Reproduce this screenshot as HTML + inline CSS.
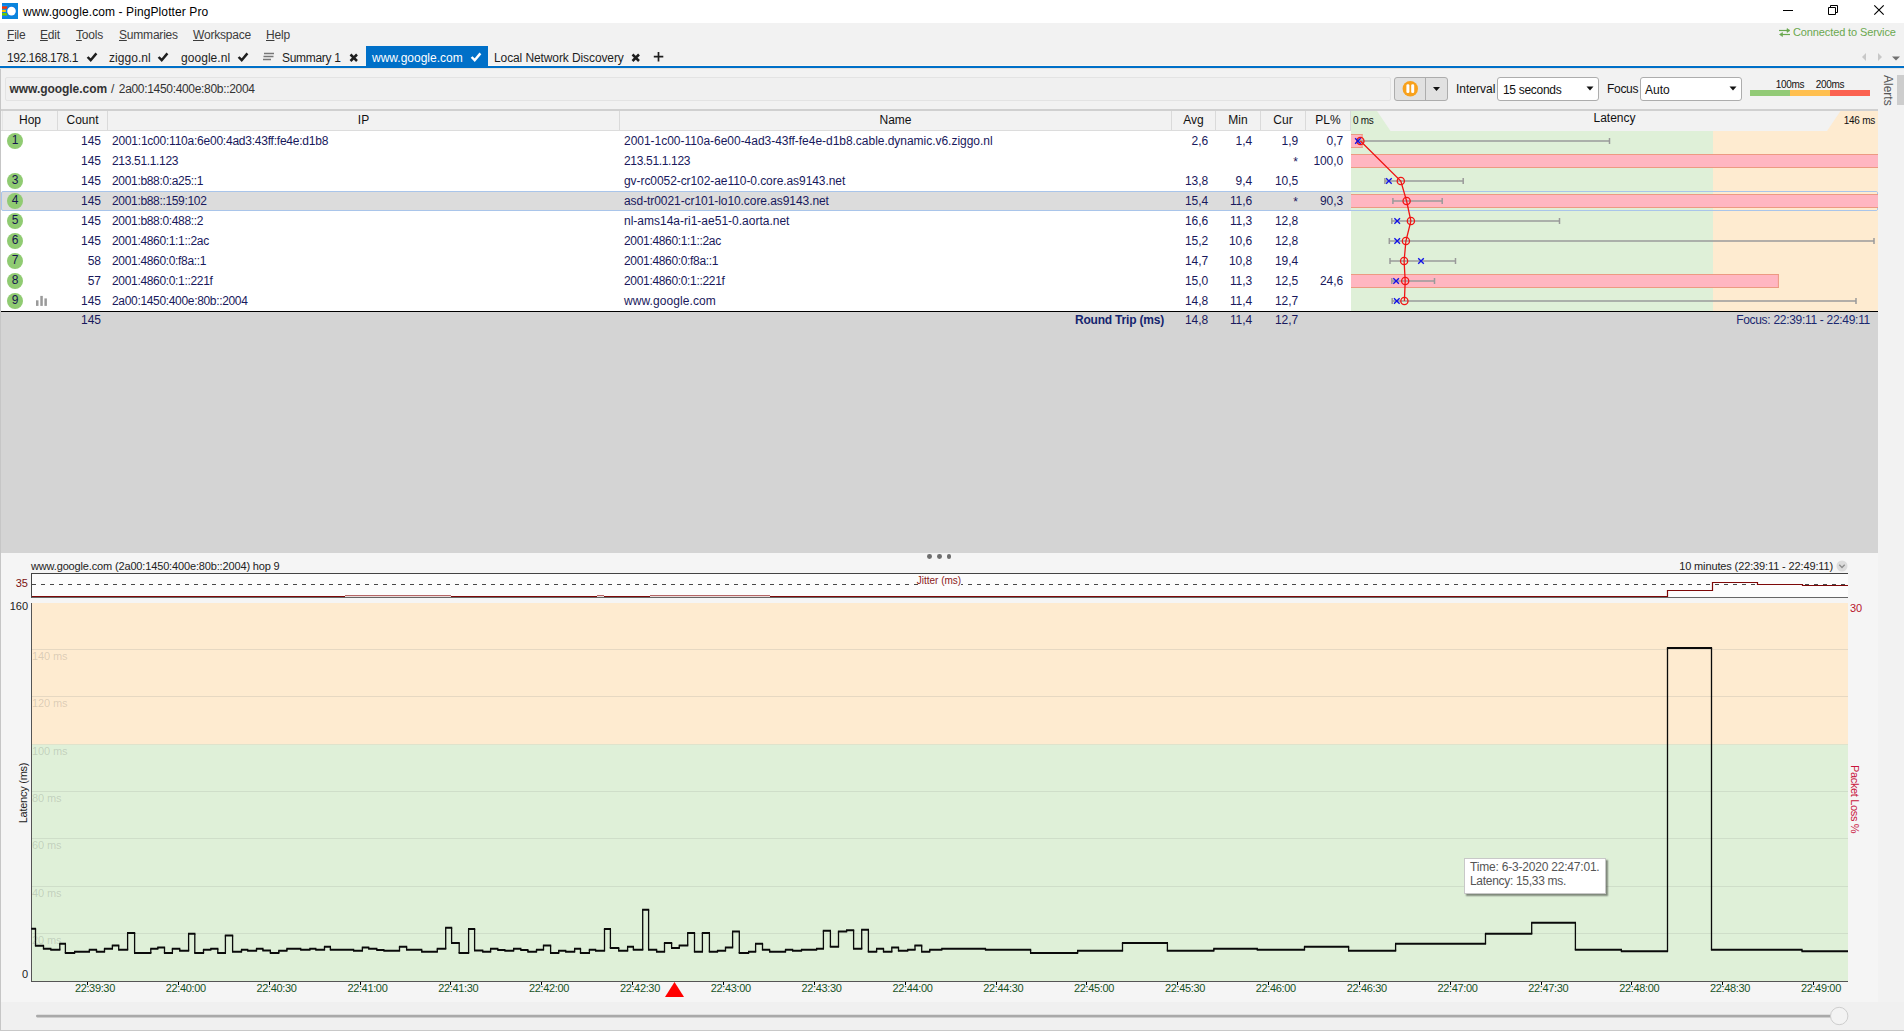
<!DOCTYPE html>
<html lang="en"><head><meta charset="utf-8"><title>www.google.com - PingPlotter Pro</title>
<style>
html,body{margin:0;padding:0;}
body{width:1904px;height:1031px;overflow:hidden;position:relative;background:#f2f2f2;font-family:"Liberation Sans",sans-serif;font-size:12px;color:#000;}
div{position:absolute;box-sizing:border-box;}
.t{white-space:nowrap;}
.nv{color:#18185c;}
svg{position:absolute;left:0;top:0;overflow:visible;}
u{text-decoration:underline;text-underline-offset:1px;}
</style></head><body>

<div style="left:0px;top:0px;width:1904px;height:23px;background:#fff;"></div>
<svg width="24" height="24" viewBox="0 0 24 24" style="left:0;top:0">
<rect x="2" y="3" width="16" height="16" fill="#0a84dc"/>
<rect x="2" y="5" width="5.5" height="1.2" fill="#0a90ff"/>
<rect x="2" y="6.4" width="5.2" height="2.4" fill="#ff3200"/>
<rect x="2" y="9.8" width="3.8" height="2.2" fill="#ffc400"/>
<rect x="2" y="13" width="5.2" height="2.5" fill="#6cc800"/>
<rect x="2" y="16" width="5.5" height="1.2" fill="#0a80ff"/>
<circle cx="11.5" cy="11.1" r="5.3" fill="#0a7ce4"/>
<circle cx="11.5" cy="11.1" r="4.3" fill="#fff"/>
</svg>
<div class="t" style="left:23px;top:1px;height:23px;line-height:23px;font-size:12px;letter-spacing:0.1px;">www.google.com - PingPlotter Pro</div>
<svg width="1904" height="24" style="left:0;top:0">
<path d="M1783 10.5h10" stroke="#000" stroke-width="1" fill="none"/>
<path d="M1828.5 7.5h7v7h-7z M1830.5 7.5v-2h7v7h-2" stroke="#000" stroke-width="1" fill="none"/>
<path d="M1874.3 5.3l9.4 9.4 M1883.7 5.3l-9.4 9.4" stroke="#000" stroke-width="1.15" fill="none"/>
</svg>
<div class="t" style="left:7px;top:25px;height:20px;line-height:20px;color:#3c3c3c;letter-spacing:-0.2px;"><u>F</u>ile</div>
<div class="t" style="left:40px;top:25px;height:20px;line-height:20px;color:#3c3c3c;letter-spacing:-0.2px;"><u>E</u>dit</div>
<div class="t" style="left:76px;top:25px;height:20px;line-height:20px;color:#3c3c3c;letter-spacing:-0.2px;"><u>T</u>ools</div>
<div class="t" style="left:119px;top:25px;height:20px;line-height:20px;color:#3c3c3c;letter-spacing:-0.2px;"><u>S</u>ummaries</div>
<div class="t" style="left:193px;top:25px;height:20px;line-height:20px;color:#3c3c3c;letter-spacing:-0.2px;"><u>W</u>orkspace</div>
<div class="t" style="left:266px;top:25px;height:20px;line-height:20px;color:#3c3c3c;letter-spacing:-0.2px;"><u>H</u>elp</div>
<svg width="1904" height="50" style="left:0;top:0">
<g stroke="#6aa84f" stroke-width="1.2" fill="#6aa84f">
<path d="M1779 30.5h9" /><path d="M1787 28.5l3 2-3 2z" stroke-width="0.6"/>
<path d="M1782 34.5h8" /><path d="M1782.5 32.5l-3 2 3 2z" stroke-width="0.6"/>
</g></svg>
<div class="t" style="left:1793px;top:22px;height:20px;line-height:20px;color:#6aa84f;font-size:11px;letter-spacing:-0.12px;">Connected to Service</div>
<div style="left:0px;top:65px;width:1904px;height:1px;background:#fbf8f4;"></div>
<div style="left:366px;top:46px;width:122px;height:20px;background:#0070c8;"></div>
<div class="t" style="left:7px;top:48px;height:20px;line-height:20px;letter-spacing:-0.45px;color:#1e1e1e;">192.168.178.1</div>
<svg width="14" height="12" style="left:86px;top:51px"><path d="M1.6 6 L4.7 9.2 L10.4 2.4" stroke="#1e1e1e" stroke-width="2.5" fill="none"/></svg>
<div class="t" style="left:109px;top:48px;height:20px;line-height:20px;letter-spacing:0.05px;color:#1e1e1e;">ziggo.nl</div>
<svg width="14" height="12" style="left:157px;top:51px"><path d="M1.6 6 L4.7 9.2 L10.4 2.4" stroke="#1e1e1e" stroke-width="2.5" fill="none"/></svg>
<div class="t" style="left:181px;top:48px;height:20px;line-height:20px;letter-spacing:0.05px;color:#1e1e1e;">google.nl</div>
<svg width="14" height="12" style="left:237px;top:51px"><path d="M1.6 6 L4.7 9.2 L10.4 2.4" stroke="#1e1e1e" stroke-width="2.5" fill="none"/></svg>
<svg width="14" height="12" style="left:262px;top:51px"><path d="M2 2.5h10 M1.5 5.5h10 M1 8.5h8" stroke="#777" stroke-width="1.5" fill="none"/></svg>
<div class="t" style="left:282px;top:48px;height:20px;line-height:20px;letter-spacing:-0.3px;color:#1e1e1e;">Summary 1</div>
<svg width="10" height="10" style="left:349px;top:53px"><path d="M1.5 1.5 L8 8 M8 1.5 L1.5 8" stroke="#1e1e1e" stroke-width="2.5" fill="none"/></svg>
<div class="t" style="left:372px;top:48px;height:20px;line-height:20px;color:#fff;">www.google.com</div>
<svg width="14" height="12" style="left:470px;top:51px"><path d="M1.6 6 L4.7 9.2 L10.4 2.4" stroke="#fff" stroke-width="2.5" fill="none"/></svg>
<div class="t" style="left:494px;top:48px;height:20px;line-height:20px;letter-spacing:-0.1px;color:#1e1e1e;">Local Network Discovery</div>
<svg width="10" height="10" style="left:631px;top:53px"><path d="M1.5 1.5 L8 8 M8 1.5 L1.5 8" stroke="#1e1e1e" stroke-width="2.5" fill="none"/></svg>
<svg width="12" height="12" style="left:653px;top:51px"><path d="M5.5 1v9.5 M0.8 5.7h9.5" stroke="#1e1e1e" stroke-width="1.7" fill="none"/></svg>
<svg width="1904" height="70" style="left:0;top:0">
<path d="M1866 53 l-4 4 4 4z" fill="#c8c8c8"/><path d="M1878 53 l4 4 -4 4z" fill="#c8c8c8"/>
<path d="M1892 56.5h8l-4 4z" fill="#707070"/></svg>
<div style="left:0px;top:66px;width:1904px;height:2px;background:#0070c8;"></div>
<div style="left:0px;top:68px;width:1904px;height:1px;background:#e8e4e0;"></div>
<div style="left:0px;top:69px;width:1904px;height:962px;background:#f2f2f2;"></div>
<div style="left:0px;top:69px;width:1878px;height:40px;background:#f2f2f2;"></div>
<div style="left:0px;top:69px;width:1px;height:962px;background:#c6c6c6;"></div>
<div style="left:5px;top:77px;width:1386px;height:24px;background:#f0f0f0;border:1px solid #e3e3e3;border-radius:2px;"></div>
<div class="t" style="left:9.5px;top:79px;height:20px;line-height:20px;color:#333;letter-spacing:-0.05px;"><b>www.google.com</b></div>
<div class="t" style="left:111px;top:79px;height:20px;line-height:20px;color:#333;">/</div>
<div class="t" style="left:118.8px;top:79px;height:20px;line-height:20px;color:#333;letter-spacing:-0.32px;">2a00:1450:400e:80b::2004</div>
<div style="left:1394px;top:77px;width:54px;height:24px;background:#e1e1e1;border:1px solid #adadad;border-radius:3px;"></div>
<div style="left:1425px;top:78px;width:1px;height:22px;background:#adadad;"></div>
<svg width="1904" height="110" style="left:0;top:0">
<circle cx="1410.3" cy="88.7" r="7.7" fill="#f8a11c"/>
<rect x="1406.4" y="84.3" width="3" height="8.8" rx="1.3" fill="#fff"/><rect x="1411.2" y="84.3" width="3" height="8.8" rx="1.3" fill="#fff"/>
<path d="M1433 87h7l-3.5 4z" fill="#111"/>
</svg>
<div class="t" style="left:1456px;top:79px;height:20px;line-height:20px;color:#111;">Interval</div>
<div style="left:1497px;top:77px;width:102px;height:24px;background:#fff;border:1px solid #adadad;border-radius:3px;"></div>
<div class="t" style="left:1503px;top:80px;height:20px;line-height:20px;color:#111;letter-spacing:-0.3px;">15 seconds</div>
<div class="t" style="left:1607px;top:79px;height:20px;line-height:20px;color:#111;letter-spacing:-0.3px;">Focus</div>
<div style="left:1640px;top:77px;width:102px;height:24px;background:#fff;border:1px solid #adadad;border-radius:3px;"></div>
<div class="t" style="left:1645px;top:80px;height:20px;line-height:20px;color:#111;">Auto</div>
<svg width="1904" height="110" style="left:0;top:0">
<path d="M1586.5 86.5h7l-3.5 4z" fill="#111"/>
<path d="M1729.5 86.5h7l-3.5 4z" fill="#111"/>
</svg>
<div style="left:1750px;top:90px;width:40px;height:6px;background:#92ca76;"></div>
<div style="left:1790px;top:90px;width:40px;height:6px;background:#ffbf4f;"></div>
<div style="left:1830px;top:90px;width:40px;height:6px;background:#fb6250;"></div>
<div class="t" style="left:1770px;top:79px;height:12px;line-height:12px;font-size:10px;width:40px;text-align:center;color:#111;letter-spacing:-0.3px;">100ms</div>
<div class="t" style="left:1810px;top:79px;height:12px;line-height:12px;font-size:10px;width:40px;text-align:center;color:#111;letter-spacing:-0.3px;">200ms</div>
<div style="left:1897px;top:75px;width:7px;height:30px;background:#cdcdcd;"></div>
<div class="t" style="left:1888px;top:75px;height:14px;line-height:14px;transform-origin:0 0;transform:rotate(90deg) translate(0,-7px);color:#555;font-size:12px;">Alerts</div>
<div style="left:1px;top:109px;width:1877px;height:2px;background:#d0d0d0;"></div>
<div style="left:1px;top:111px;width:1877px;height:20px;background:#f2f2f2;border-bottom:1px solid #dcdcdc;"></div>
<div style="left:1px;top:131px;width:1350px;height:180px;background:#fff;"></div>
<div class="t" style="left:3px;top:110px;height:20px;line-height:20px;width:54px;text-align:center;color:#111;">Hop</div>
<div style="left:57px;top:111px;width:1px;height:19px;background:#dadada;"></div>
<div class="t" style="left:58px;top:110px;height:20px;line-height:20px;width:49px;text-align:center;color:#111;">Count</div>
<div style="left:107px;top:111px;width:1px;height:19px;background:#dadada;"></div>
<div class="t" style="left:108px;top:110px;height:20px;line-height:20px;width:511px;text-align:center;color:#111;">IP</div>
<div style="left:619px;top:111px;width:1px;height:19px;background:#dadada;"></div>
<div class="t" style="left:620px;top:110px;height:20px;line-height:20px;width:551px;text-align:center;color:#111;">Name</div>
<div style="left:1171px;top:111px;width:1px;height:19px;background:#dadada;"></div>
<div class="t" style="left:1172px;top:110px;height:20px;line-height:20px;width:43px;text-align:center;color:#111;">Avg</div>
<div style="left:1215px;top:111px;width:1px;height:19px;background:#dadada;"></div>
<div class="t" style="left:1216px;top:110px;height:20px;line-height:20px;width:44px;text-align:center;color:#111;">Min</div>
<div style="left:1260px;top:111px;width:1px;height:19px;background:#dadada;"></div>
<div class="t" style="left:1261px;top:110px;height:20px;line-height:20px;width:44px;text-align:center;color:#111;">Cur</div>
<div style="left:1305px;top:111px;width:1px;height:19px;background:#dadada;"></div>
<div class="t" style="left:1306px;top:110px;height:20px;line-height:20px;width:44px;text-align:center;color:#111;">PL%</div>
<div style="left:1350px;top:111px;width:1px;height:19px;background:#dadada;"></div>
<div style="left:2px;top:111px;width:1px;height:19px;background:#e6e6e6;"></div>
<div style="left:1351px;top:131px;width:362px;height:180px;background:#dff0d8;"></div>
<div style="left:1713px;top:131px;width:165px;height:180px;background:#feebd0;"></div>
<div style="left:1px;top:191px;width:1877px;height:20px;background:#dcdcdc;border:1px solid #a9c5ea;border-radius:2px;"></div>
<div style="left:1351px;top:192px;width:362px;height:18px;background:#dff0d8;"></div>
<div style="left:1713px;top:192px;width:164px;height:18px;background:#feebd0;"></div>
<div style="left:7px;top:133px;width:16px;height:16px;background:#90cb72;border-radius:50%;"></div>
<div class="t" style="left:7px;top:131px;height:19px;line-height:19px;width:16px;text-align:center;color:#15154f;">1</div>
<div class="t nv" style="left:58px;top:131px;height:20px;line-height:20px;width:43px;text-align:right;">145</div>
<div class="t nv" style="left:112px;top:131px;height:20px;line-height:20px;letter-spacing:-0.23px;">2001:1c00:110a:6e00:4ad3:43ff:fe4e:d1b8</div>
<div class="t nv" style="left:624px;top:131px;height:20px;line-height:20px;letter-spacing:-0.03px;">2001-1c00-110a-6e00-4ad3-43ff-fe4e-d1b8.cable.dynamic.v6.ziggo.nl</div>
<div class="t nv" style="left:1148px;top:131px;height:20px;line-height:20px;width:60px;text-align:right;letter-spacing:-0.1px;">2,6</div>
<div class="t nv" style="left:1192px;top:131px;height:20px;line-height:20px;width:60px;text-align:right;letter-spacing:-0.1px;">1,4</div>
<div class="t nv" style="left:1238px;top:131px;height:20px;line-height:20px;width:60px;text-align:right;letter-spacing:-0.1px;">1,9</div>
<div class="t nv" style="left:1283px;top:131px;height:20px;line-height:20px;width:60px;text-align:right;letter-spacing:-0.1px;">0,7</div>
<div class="t nv" style="left:58px;top:151px;height:20px;line-height:20px;width:43px;text-align:right;">145</div>
<div class="t nv" style="left:112px;top:151px;height:20px;line-height:20px;letter-spacing:-0.33px;">213.51.1.123</div>
<div class="t nv" style="left:624px;top:151px;height:20px;line-height:20px;letter-spacing:-0.33px;">213.51.1.123</div>
<div class="t nv" style="left:1278px;top:152px;height:20px;line-height:20px;width:20px;text-align:right;">*</div>
<div class="t nv" style="left:1283px;top:151px;height:20px;line-height:20px;width:60px;text-align:right;letter-spacing:-0.1px;">100,0</div>
<div style="left:7px;top:173px;width:16px;height:16px;background:#90cb72;border-radius:50%;"></div>
<div class="t" style="left:7px;top:171px;height:19px;line-height:19px;width:16px;text-align:center;color:#15154f;">3</div>
<div class="t nv" style="left:58px;top:171px;height:20px;line-height:20px;width:43px;text-align:right;">145</div>
<div class="t nv" style="left:112px;top:171px;height:20px;line-height:20px;letter-spacing:-0.33px;">2001:b88:0:a25::1</div>
<div class="t nv" style="left:624px;top:171px;height:20px;line-height:20px;letter-spacing:-0.07px;">gv-rc0052-cr102-ae110-0.core.as9143.net</div>
<div class="t nv" style="left:1148px;top:171px;height:20px;line-height:20px;width:60px;text-align:right;letter-spacing:-0.1px;">13,8</div>
<div class="t nv" style="left:1192px;top:171px;height:20px;line-height:20px;width:60px;text-align:right;letter-spacing:-0.1px;">9,4</div>
<div class="t nv" style="left:1238px;top:171px;height:20px;line-height:20px;width:60px;text-align:right;letter-spacing:-0.1px;">10,5</div>
<div style="left:7px;top:193px;width:16px;height:16px;background:#90cb72;border-radius:50%;"></div>
<div class="t" style="left:7px;top:191px;height:19px;line-height:19px;width:16px;text-align:center;color:#15154f;">4</div>
<div class="t nv" style="left:58px;top:191px;height:20px;line-height:20px;width:43px;text-align:right;">145</div>
<div class="t nv" style="left:112px;top:191px;height:20px;line-height:20px;letter-spacing:-0.33px;">2001:b88::159:102</div>
<div class="t nv" style="left:624px;top:191px;height:20px;line-height:20px;letter-spacing:-0.07px;">asd-tr0021-cr101-lo10.core.as9143.net</div>
<div class="t nv" style="left:1148px;top:191px;height:20px;line-height:20px;width:60px;text-align:right;letter-spacing:-0.1px;">15,4</div>
<div class="t nv" style="left:1192px;top:191px;height:20px;line-height:20px;width:60px;text-align:right;letter-spacing:-0.1px;">11,6</div>
<div class="t nv" style="left:1278px;top:192px;height:20px;line-height:20px;width:20px;text-align:right;">*</div>
<div class="t nv" style="left:1283px;top:191px;height:20px;line-height:20px;width:60px;text-align:right;letter-spacing:-0.1px;">90,3</div>
<div style="left:7px;top:213px;width:16px;height:16px;background:#90cb72;border-radius:50%;"></div>
<div class="t" style="left:7px;top:211px;height:19px;line-height:19px;width:16px;text-align:center;color:#15154f;">5</div>
<div class="t nv" style="left:58px;top:211px;height:20px;line-height:20px;width:43px;text-align:right;">145</div>
<div class="t nv" style="left:112px;top:211px;height:20px;line-height:20px;letter-spacing:-0.33px;">2001:b88:0:488::2</div>
<div class="t nv" style="left:624px;top:211px;height:20px;line-height:20px;letter-spacing:0px;">nl-ams14a-ri1-ae51-0.aorta.net</div>
<div class="t nv" style="left:1148px;top:211px;height:20px;line-height:20px;width:60px;text-align:right;letter-spacing:-0.1px;">16,6</div>
<div class="t nv" style="left:1192px;top:211px;height:20px;line-height:20px;width:60px;text-align:right;letter-spacing:-0.1px;">11,3</div>
<div class="t nv" style="left:1238px;top:211px;height:20px;line-height:20px;width:60px;text-align:right;letter-spacing:-0.1px;">12,8</div>
<div style="left:7px;top:233px;width:16px;height:16px;background:#90cb72;border-radius:50%;"></div>
<div class="t" style="left:7px;top:231px;height:19px;line-height:19px;width:16px;text-align:center;color:#15154f;">6</div>
<div class="t nv" style="left:58px;top:231px;height:20px;line-height:20px;width:43px;text-align:right;">145</div>
<div class="t nv" style="left:112px;top:231px;height:20px;line-height:20px;letter-spacing:-0.33px;">2001:4860:1:1::2ac</div>
<div class="t nv" style="left:624px;top:231px;height:20px;line-height:20px;letter-spacing:-0.33px;">2001:4860:1:1::2ac</div>
<div class="t nv" style="left:1148px;top:231px;height:20px;line-height:20px;width:60px;text-align:right;letter-spacing:-0.1px;">15,2</div>
<div class="t nv" style="left:1192px;top:231px;height:20px;line-height:20px;width:60px;text-align:right;letter-spacing:-0.1px;">10,6</div>
<div class="t nv" style="left:1238px;top:231px;height:20px;line-height:20px;width:60px;text-align:right;letter-spacing:-0.1px;">12,8</div>
<div style="left:7px;top:253px;width:16px;height:16px;background:#90cb72;border-radius:50%;"></div>
<div class="t" style="left:7px;top:251px;height:19px;line-height:19px;width:16px;text-align:center;color:#15154f;">7</div>
<div class="t nv" style="left:58px;top:251px;height:20px;line-height:20px;width:43px;text-align:right;">58</div>
<div class="t nv" style="left:112px;top:251px;height:20px;line-height:20px;letter-spacing:-0.33px;">2001:4860:0:f8a::1</div>
<div class="t nv" style="left:624px;top:251px;height:20px;line-height:20px;letter-spacing:-0.33px;">2001:4860:0:f8a::1</div>
<div class="t nv" style="left:1148px;top:251px;height:20px;line-height:20px;width:60px;text-align:right;letter-spacing:-0.1px;">14,7</div>
<div class="t nv" style="left:1192px;top:251px;height:20px;line-height:20px;width:60px;text-align:right;letter-spacing:-0.1px;">10,8</div>
<div class="t nv" style="left:1238px;top:251px;height:20px;line-height:20px;width:60px;text-align:right;letter-spacing:-0.1px;">19,4</div>
<div style="left:7px;top:273px;width:16px;height:16px;background:#90cb72;border-radius:50%;"></div>
<div class="t" style="left:7px;top:271px;height:19px;line-height:19px;width:16px;text-align:center;color:#15154f;">8</div>
<div class="t nv" style="left:58px;top:271px;height:20px;line-height:20px;width:43px;text-align:right;">57</div>
<div class="t nv" style="left:112px;top:271px;height:20px;line-height:20px;letter-spacing:-0.33px;">2001:4860:0:1::221f</div>
<div class="t nv" style="left:624px;top:271px;height:20px;line-height:20px;letter-spacing:-0.33px;">2001:4860:0:1::221f</div>
<div class="t nv" style="left:1148px;top:271px;height:20px;line-height:20px;width:60px;text-align:right;letter-spacing:-0.1px;">15,0</div>
<div class="t nv" style="left:1192px;top:271px;height:20px;line-height:20px;width:60px;text-align:right;letter-spacing:-0.1px;">11,3</div>
<div class="t nv" style="left:1238px;top:271px;height:20px;line-height:20px;width:60px;text-align:right;letter-spacing:-0.1px;">12,5</div>
<div class="t nv" style="left:1283px;top:271px;height:20px;line-height:20px;width:60px;text-align:right;letter-spacing:-0.1px;">24,6</div>
<div style="left:7px;top:293px;width:16px;height:16px;background:#90cb72;border-radius:50%;"></div>
<div class="t" style="left:7px;top:291px;height:19px;line-height:19px;width:16px;text-align:center;color:#15154f;">9</div>
<div class="t nv" style="left:58px;top:291px;height:20px;line-height:20px;width:43px;text-align:right;">145</div>
<div class="t nv" style="left:112px;top:291px;height:20px;line-height:20px;letter-spacing:-0.33px;">2a00:1450:400e:80b::2004</div>
<div class="t nv" style="left:624px;top:291px;height:20px;line-height:20px;letter-spacing:0.08px;">www.google.com</div>
<div class="t nv" style="left:1148px;top:291px;height:20px;line-height:20px;width:60px;text-align:right;letter-spacing:-0.1px;">14,8</div>
<div class="t nv" style="left:1192px;top:291px;height:20px;line-height:20px;width:60px;text-align:right;letter-spacing:-0.1px;">11,4</div>
<div class="t nv" style="left:1238px;top:291px;height:20px;line-height:20px;width:60px;text-align:right;letter-spacing:-0.1px;">12,7</div>
<svg width="14" height="14" style="left:35px;top:293px"><rect x="1" y="7.3" width="2.5" height="5.6" fill="#9a9a9a"/><rect x="5.3" y="2.9" width="2.5" height="10" fill="#9a9a9a"/><rect x="9.4" y="5.4" width="2.5" height="7.5" fill="#9a9a9a"/></svg>
<div style="left:1px;top:311px;width:1877px;height:242px;background:#d4d4d4;"></div>
<div style="left:1px;top:311px;width:1877px;height:1px;background:#000;"></div>
<div class="t nv" style="left:58px;top:310px;height:20px;line-height:20px;width:43px;text-align:right;">145</div>
<div class="t nv" style="left:1064px;top:310px;height:20px;line-height:20px;width:100px;text-align:right;letter-spacing:-0.2px;color:#14246e;"><b>Round Trip (ms)</b></div>
<div class="t nv" style="left:1148px;top:310px;height:20px;line-height:20px;width:60px;text-align:right;letter-spacing:-0.1px;">14,8</div>
<div class="t nv" style="left:1192px;top:310px;height:20px;line-height:20px;width:60px;text-align:right;letter-spacing:-0.1px;">11,4</div>
<div class="t nv" style="left:1238px;top:310px;height:20px;line-height:20px;width:60px;text-align:right;letter-spacing:-0.1px;">12,7</div>
<div class="t nv" style="left:1700px;top:310px;height:20px;line-height:20px;width:170px;text-align:right;letter-spacing:-0.3px;color:#1a2870;">Focus: 22:39:11 - 22:49:11</div>
<svg width="1904" height="320" style="left:0;top:0">
<rect x="1351" y="129" width="527" height="2" fill="#f2f2f2"/>
<path d="M1351 111H1377L1390.5 131H1351z" fill="#dff0d8"/>
<path d="M1878 111H1840.5L1827 131H1878z" fill="#feebd0"/>
<rect x="1351" y="134" width="11.6" height="14" fill="#ffb6c1"/>
<path d="M1351 134.5H1362.6 M1351 147.5H1362.6" stroke="#ec9a82" stroke-width="1" fill="none"/>
<path d="M1362.1 134V148" stroke="#ec9a82" stroke-width="1" fill="none"/>
<rect x="1351" y="154" width="527.0" height="14" fill="#ffb6c1"/>
<path d="M1351 154.5H1878.0 M1351 167.5H1878.0" stroke="#ec9a82" stroke-width="1" fill="none"/>
<rect x="1351" y="194" width="527.0" height="14" fill="#ffb6c1"/>
<path d="M1351 194.5H1878.0 M1351 207.5H1878.0" stroke="#ec9a82" stroke-width="1" fill="none"/>
<rect x="1351" y="274" width="427.9" height="14" fill="#ffb6c1"/>
<path d="M1351 274.5H1778.9 M1351 287.5H1778.9" stroke="#ec9a82" stroke-width="1" fill="none"/>
<path d="M1778.4 274V288" stroke="#ec9a82" stroke-width="1" fill="none"/>
<path d="M1358.4 141H1609.5 M1358.4 138v6 M1609.5 138v6" stroke="#9a9a9a" stroke-width="1.5" fill="none"/>
<path d="M1384.9 181H1463.2 M1384.9 178v6 M1463.2 178v6" stroke="#9a9a9a" stroke-width="1.5" fill="none"/>
<path d="M1392.9 201H1442.2 M1392.9 198v6 M1442.2 198v6" stroke="#9a9a9a" stroke-width="1.5" fill="none"/>
<path d="M1391.8 221H1559.5 M1391.8 218v6 M1559.5 218v6" stroke="#9a9a9a" stroke-width="1.5" fill="none"/>
<path d="M1389.3 241H1874.0 M1389.3 238v6 M1874.0 238v6" stroke="#9a9a9a" stroke-width="1.5" fill="none"/>
<path d="M1390.0 261H1455.5 M1390.0 258v6 M1455.5 258v6" stroke="#9a9a9a" stroke-width="1.5" fill="none"/>
<path d="M1391.8 281H1434.5 M1391.8 278v6 M1434.5 278v6" stroke="#9a9a9a" stroke-width="1.5" fill="none"/>
<path d="M1392.2 301H1856.0 M1392.2 298v6 M1856.0 298v6" stroke="#9a9a9a" stroke-width="1.5" fill="none"/>
<path d="M1360.4 141 L1400.8 181 L1406.6 201 L1410.9 221 L1405.9 241 L1404.1 261 L1405.2 281 L1404.4 301" stroke="#f01414" stroke-width="1.3" fill="none"/>
<circle cx="1360.4" cy="141" r="3.6" stroke="#f01414" stroke-width="1.3" fill="none"/>
<circle cx="1400.8" cy="181" r="3.6" stroke="#f01414" stroke-width="1.3" fill="none"/>
<circle cx="1406.6" cy="201" r="3.6" stroke="#f01414" stroke-width="1.3" fill="none"/>
<circle cx="1410.9" cy="221" r="3.6" stroke="#f01414" stroke-width="1.3" fill="none"/>
<circle cx="1405.9" cy="241" r="3.6" stroke="#f01414" stroke-width="1.3" fill="none"/>
<circle cx="1404.1" cy="261" r="3.6" stroke="#f01414" stroke-width="1.3" fill="none"/>
<circle cx="1405.2" cy="281" r="3.6" stroke="#f01414" stroke-width="1.3" fill="none"/>
<circle cx="1404.4" cy="301" r="3.6" stroke="#f01414" stroke-width="1.3" fill="none"/>
<path d="M1355.1 138.2l5.6 5.6 M1360.7 138.2l-5.6 5.6" stroke="#1414e6" stroke-width="1.35" fill="none"/>
<path d="M1386.1 178.2l5.6 5.6 M1391.7 178.2l-5.6 5.6" stroke="#1414e6" stroke-width="1.35" fill="none"/>
<path d="M1394.4 218.2l5.6 5.6 M1400.0 218.2l-5.6 5.6" stroke="#1414e6" stroke-width="1.35" fill="none"/>
<path d="M1394.4 238.2l5.6 5.6 M1400.0 238.2l-5.6 5.6" stroke="#1414e6" stroke-width="1.35" fill="none"/>
<path d="M1418.2 258.2l5.6 5.6 M1423.8 258.2l-5.6 5.6" stroke="#1414e6" stroke-width="1.35" fill="none"/>
<path d="M1393.3 278.2l5.6 5.6 M1398.9 278.2l-5.6 5.6" stroke="#1414e6" stroke-width="1.35" fill="none"/>
<path d="M1394.0 298.2l5.6 5.6 M1399.6 298.2l-5.6 5.6" stroke="#1414e6" stroke-width="1.35" fill="none"/>
</svg>
<div class="t" style="left:1351px;top:108px;height:20px;line-height:20px;width:527px;text-align:center;color:#111;">Latency</div>
<div class="t" style="left:1353px;top:111.4px;height:20px;line-height:20px;font-size:10px;color:#111;letter-spacing:-0.3px;">0 ms</div>
<div class="t" style="left:1800px;top:111px;height:20px;line-height:20px;width:75px;text-align:right;font-size:10px;color:#111;letter-spacing:-0.25px;">146 ms</div>
<div style="left:1px;top:553px;width:1877px;height:449px;background:#f5f5f5;"></div>
<div style="left:1px;top:1002px;width:1903px;height:28px;background:#f0f0f0;"></div>
<div style="left:0px;top:1030px;width:1904px;height:1px;background:#c8c8c8;"></div>
<div style="left:927.4px;top:553.9px;width:4.8px;height:4.8px;background:#6e6e6e;border-radius:50%;"></div>
<div style="left:937.0px;top:553.9px;width:4.8px;height:4.8px;background:#6e6e6e;border-radius:50%;"></div>
<div style="left:946.6px;top:553.9px;width:4.8px;height:4.8px;background:#6e6e6e;border-radius:50%;"></div>
<div class="t" style="left:31px;top:558px;height:16px;line-height:16px;font-size:11px;letter-spacing:-0.15px;color:#222;">www.google.com (2a00:1450:400e:80b::2004) hop 9</div>
<div class="t" style="left:1600px;top:558px;height:16px;line-height:16px;width:233px;text-align:right;font-size:11px;letter-spacing:-0.13px;color:#222;">10 minutes (22:39:11 - 22:49:11)</div>
<svg width="12" height="12" style="left:1836px;top:560px"><circle cx="6" cy="6" r="5.5" fill="#dcdcdc"/><path d="M3.3 4.8l2.7 2.7 2.7-2.7" stroke="#8c8c8c" stroke-width="1.3" fill="none"/></svg>
<div style="left:31px;top:573px;width:1817px;height:25px;background:#fcfcfc;border-top:1px solid #444;border-left:1px solid #444;border-bottom:1px solid #666;"></div>
<div class="t" style="left:0px;top:576px;height:14px;line-height:14px;width:28px;text-align:right;font-size:11px;color:#7a1010;">35</div>
<svg width="1904" height="1031" style="left:0;top:0">
<path d="M32 584.5H1848" stroke="#484848" stroke-width="1" stroke-dasharray="4 5" fill="none"/>
<rect x="918" y="575" width="43" height="11" fill="#fcfcfc"/>
<path d="M32 596.5H345 M451 596.5H597 M604 596.5H650 M770 596.5H1667.5V590.5H1712.5V582.5H1757.5V584.5H1802.5V585.5H1848" stroke="#7d0808" stroke-width="1.2" fill="none"/>
<path d="M345 595.7H451 M597 595.7H604 M650 595.7H770" stroke="#9a3030" stroke-width="0.9" fill="none"/>
</svg>
<div class="t" style="left:889px;top:573.6px;height:14px;line-height:14px;width:100px;text-align:center;font-size:10px;color:#8b1a1a;">Jitter (ms)</div>
<div style="left:32px;top:603px;width:1816px;height:141px;background:#feebd0;"></div>
<div style="left:32px;top:744px;width:1816px;height:237px;background:#dff0d8;"></div>
<svg width="1904" height="1031" style="left:0;top:0">
<path d="M32 649.5H1848" stroke="#e6d8c2" stroke-width="1"/>
<path d="M32 696.5H1848" stroke="#e6d8c2" stroke-width="1"/>
<path d="M32 744.5H1848" stroke="#dfe3cc" stroke-width="1"/>
<path d="M32 791.5H1848" stroke="#cfdec9" stroke-width="1"/>
<path d="M32 838.5H1848" stroke="#cfdec9" stroke-width="1"/>
<path d="M32 886.5H1848" stroke="#cfdec9" stroke-width="1"/>
<path d="M32 933.5H1848" stroke="#cfdec9" stroke-width="1"/>
<path d="M31.5 603V981" stroke="#555" stroke-width="1"/>
<path d="M31 981.5H1848" stroke="#555" stroke-width="1"/>
<path d="M87.5 982V985" stroke="#000" stroke-width="1"/>
<path d="M178.5 982V985" stroke="#000" stroke-width="1"/>
<path d="M269.5 982V985" stroke="#000" stroke-width="1"/>
<path d="M360.5 982V985" stroke="#000" stroke-width="1"/>
<path d="M450.5 982V985" stroke="#000" stroke-width="1"/>
<path d="M541.5 982V985" stroke="#000" stroke-width="1"/>
<path d="M632.5 982V985" stroke="#000" stroke-width="1"/>
<path d="M723.5 982V985" stroke="#000" stroke-width="1"/>
<path d="M814.5 982V985" stroke="#000" stroke-width="1"/>
<path d="M905.5 982V985" stroke="#000" stroke-width="1"/>
<path d="M996.5 982V985" stroke="#000" stroke-width="1"/>
<path d="M1086.5 982V985" stroke="#000" stroke-width="1"/>
<path d="M1177.5 982V985" stroke="#000" stroke-width="1"/>
<path d="M1268.5 982V985" stroke="#000" stroke-width="1"/>
<path d="M1359.5 982V985" stroke="#000" stroke-width="1"/>
<path d="M1450.5 982V985" stroke="#000" stroke-width="1"/>
<path d="M1541.5 982V985" stroke="#000" stroke-width="1"/>
<path d="M1631.5 982V985" stroke="#000" stroke-width="1"/>
<path d="M1722.5 982V985" stroke="#000" stroke-width="1"/>
<path d="M1813.5 982V985" stroke="#000" stroke-width="1"/>
<path d="M31.2 928.7H36.1M34.9 945.8H44.1M42.9 948.8H51.4M50.2 949.8H60.4M59.2 943.8H66.0M64.8 953H75.2M74.0 951.8H90.0M88.8 949.7H97.1M95.9 951.8H105.1M103.9 948.8H113.0M111.8 945.5H119.3M118.1 949.7H128.2M127.0 932.9H135.2M134.0 953H151.4M150.2 948.8H158.4M157.2 947.6H165.1M163.9 953H173.0M171.8 948.8H180.3M179.1 950.8H189.2M188.0 933.7H195.4M194.2 953H204.1M202.9 949.7H211.4M210.2 948.8H218.4M217.2 953H226.0M224.8 935.4H233.2M232.0 951.8H242.1M240.9 949.7H248.3M247.1 950.8H257.1M255.9 948.8H263.5M262.3 950.5H271.0M269.8 953H279.4M278.2 950.8H287.5M286.3 948.8H301.3M300.1 949.7H310.5M309.3 948.8H316.4M315.2 949.7H325.1M323.9 946.8H331.0M329.8 949.7H354.2M353.0 950.8H363.0M361.8 947.6H369.3M368.1 948.8H377.4M376.2 950H384.5M383.3 950.8H400.1M398.9 946.8H407.2M406.0 949.7H422.3M421.1 951.8H437.9M436.7 948.8H446.3M445.1 927.8H452.2M451.0 942.9H459.8M458.6 953H469.2M468.0 929H475.2M474.0 950.5H483.3M482.1 951.8H491.2M490.0 948.8H498.4M497.2 950H505.5M504.3 950.8H514.2M513.0 948.8H521.4M520.2 950H528.5M527.3 951.8H537.1M535.9 949.7H544.1M542.9 945.5H551.2M550.0 953H559.3M558.1 950.8H566.3M565.1 951.8H575.2M574.0 948.8H581.1M579.9 953H590.0M588.8 949.7H596.2M595.0 950.8H605.1M603.9 929H611.0M609.8 948H619.3M618.1 950.8H628.2M627.0 946.8H634.0M632.8 949.7H643.3M642.1 909.8H649.2M648.0 949.7H657.2M656.0 951.8H665.1M663.9 942.9H672.2M671.0 948H679.9M678.7 945.5H688.3M687.1 932.9H695.1M693.9 951.8H703.0M701.8 932.9H710.0M708.8 951.8H718.1M716.9 950.8H726.1M724.9 947.6H733.2M732.0 931.5H739.9M738.7 953H749.2M748.0 951.8H756.2M755.0 943.8H763.1M761.9 949.7H770.2M769.0 951.8H786.1M784.9 949.7H793.2M792.0 950.8H802.1M800.9 949.7H817.2M816.0 948.8H824.0M822.8 930.7H831.0M829.8 946.8H839.1M837.9 931.5H847.2M846.0 930.3H854.2M853.0 948.8H862.3M861.1 929.8H869.0M867.8 951.8H877.2M876.0 948.8H884.1M882.9 951.8H892.4M891.2 947.6H899.1M897.9 950.8H908.3M907.1 949.7H915.6M914.4 945.5H922.3M921.1 951.8H930.3M929.1 949.7H942.4M941.2 948.8H986.1M984.9 949.7H1031.2M1030.0 953H1078.2M1077.0 950.8H1123.1M1121.9 942.9H1168.0M1166.8 950.8H1214.4M1213.2 948.8H1257.9M1256.7 949.8H1305.1M1303.9 946.8H1349.2M1348.0 950.8H1396.2M1395.0 943.8H1486.1M1484.9 933.7H1532.3M1531.1 922.7H1576.0M1574.8 949.8H1622.0M1620.8 951.2H1668.1M1666.9 648H1712.1M1710.9 949.8H1802.6M1801.4 951.2H1848.0" stroke="#0a0a0a" stroke-width="2" fill="none"/>
<path d="M35.5 928.7V945.8M43.5 945.8V948.8M50.8 948.8V949.8M59.8 949.8V943.8M65.4 943.8V953M74.6 953V951.8M89.4 951.8V949.7M96.5 949.7V951.8M104.5 951.8V948.8M112.4 948.8V945.5M118.7 945.5V949.7M127.6 949.7V932.9M134.6 932.9V953M150.8 953V948.8M157.8 948.8V947.6M164.5 947.6V953M172.4 953V948.8M179.7 948.8V950.8M188.6 950.8V933.7M194.8 933.7V953M203.5 953V949.7M210.8 949.7V948.8M217.8 948.8V953M225.4 953V935.4M232.6 935.4V951.8M241.5 951.8V949.7M247.7 949.7V950.8M256.5 950.8V948.8M262.9 948.8V950.5M270.4 950.5V953M278.8 953V950.8M286.9 950.8V948.8M300.7 948.8V949.7M309.9 949.7V948.8M315.8 948.8V949.7M324.5 949.7V946.8M330.4 946.8V949.7M353.6 949.7V950.8M362.4 950.8V947.6M368.7 947.6V948.8M376.8 948.8V950M383.9 950V950.8M399.5 950.8V946.8M406.6 946.8V949.7M421.7 949.7V951.8M437.3 951.8V948.8M445.7 948.8V927.8M451.6 927.8V942.9M459.2 942.9V953M468.6 953V929M474.6 929V950.5M482.7 950.5V951.8M490.6 951.8V948.8M497.8 948.8V950M504.9 950V950.8M513.6 950.8V948.8M520.8 948.8V950M527.9 950V951.8M536.5 951.8V949.7M543.5 949.7V945.5M550.6 945.5V953M558.7 953V950.8M565.7 950.8V951.8M574.6 951.8V948.8M580.5 948.8V953M589.4 953V949.7M595.6 949.7V950.8M604.5 950.8V929M610.4 929V948M618.7 948V950.8M627.6 950.8V946.8M633.4 946.8V949.7M642.7 949.7V909.8M648.6 909.8V949.7M656.6 949.7V951.8M664.5 951.8V942.9M671.6 942.9V948M679.3 948V945.5M687.7 945.5V932.9M694.5 932.9V951.8M702.4 951.8V932.9M709.4 932.9V951.8M717.5 951.8V950.8M725.5 950.8V947.6M732.6 947.6V931.5M739.3 931.5V953M748.6 953V951.8M755.6 951.8V943.8M762.5 943.8V949.7M769.6 949.7V951.8M785.5 951.8V949.7M792.6 949.7V950.8M801.5 950.8V949.7M816.6 949.7V948.8M823.4 948.8V930.7M830.4 930.7V946.8M838.5 946.8V931.5M846.6 931.5V930.3M853.6 930.3V948.8M861.7 948.8V929.8M868.4 929.8V951.8M876.6 951.8V948.8M883.5 948.8V951.8M891.8 951.8V947.6M898.5 947.6V950.8M907.7 950.8V949.7M915 949.7V945.5M921.7 945.5V951.8M929.7 951.8V949.7M941.8 949.7V948.8M985.5 948.8V949.7M1030.6 949.7V953M1077.6 953V950.8M1122.5 950.8V942.9M1167.4 942.9V950.8M1213.8 950.8V948.8M1257.3 948.8V949.8M1304.5 949.8V946.8M1348.6 946.8V950.8M1395.6 950.8V943.8M1485.5 943.8V933.7M1531.7 933.7V922.7M1575.4 922.7V949.8M1621.4 949.8V951.2M1667.5 951.2V648M1711.5 648V949.8M1802 949.8V951.2" stroke="#0a0a0a" stroke-width="1.3" fill="none"/>
<path d="M674.5 982L684 997H665z" fill="#ff0000"/>
<rect x="36" y="1014.8" width="1796" height="2.6" rx="1.3" fill="#a9a9a9"/>
<circle cx="1839.2" cy="1016" r="8.7" fill="#f3f3f3" stroke="#cdcdcd" stroke-width="1"/>
</svg>
<div class="t" style="left:32px;top:649px;height:14px;line-height:14px;font-size:11px;letter-spacing:-0.1px;color:rgba(70,70,70,0.2);">140 ms</div>
<div class="t" style="left:32px;top:696px;height:14px;line-height:14px;font-size:11px;letter-spacing:-0.1px;color:rgba(70,70,70,0.2);">120 ms</div>
<div class="t" style="left:32px;top:744px;height:14px;line-height:14px;font-size:11px;letter-spacing:-0.1px;color:rgba(70,70,70,0.2);">100 ms</div>
<div class="t" style="left:32px;top:791px;height:14px;line-height:14px;font-size:11px;letter-spacing:-0.1px;color:rgba(70,70,70,0.2);">80 ms</div>
<div class="t" style="left:32px;top:838px;height:14px;line-height:14px;font-size:11px;letter-spacing:-0.1px;color:rgba(70,70,70,0.2);">60 ms</div>
<div class="t" style="left:32px;top:886px;height:14px;line-height:14px;font-size:11px;letter-spacing:-0.1px;color:rgba(70,70,70,0.2);">40 ms</div>
<div class="t" style="left:32px;top:933px;height:14px;line-height:14px;font-size:11px;letter-spacing:-0.1px;color:rgba(70,70,70,0.2);">20 ms</div>
<div class="t" style="left:0px;top:599px;height:14px;line-height:14px;width:28px;text-align:right;font-size:11px;color:#222;">160</div>
<div class="t" style="left:0px;top:967px;height:14px;line-height:14px;width:28px;text-align:right;font-size:11px;color:#222;">0</div>
<div class="t" style="left:1850px;top:601px;height:14px;line-height:14px;font-size:11px;color:#b8142d;">30</div>
<div class="t" style="left:16px;top:824px;height:14px;line-height:14px;transform-origin:0 0;transform:rotate(-90deg);font-size:11px;letter-spacing:-0.25px;color:#222;width:62px;text-align:center;">Latency (ms)</div>
<div class="t" style="left:1862px;top:765px;height:14px;line-height:14px;transform-origin:0 0;transform:rotate(90deg);font-size:11px;letter-spacing:-0.35px;color:#c8143c;width:68px;text-align:center;">Packet Loss %</div>
<div class="t" style="left:64.9px;top:981px;height:14px;line-height:14px;width:60px;text-align:center;font-size:11px;letter-spacing:-0.35px;color:#17531f;">22:39:30</div>
<div class="t" style="left:155.7px;top:981px;height:14px;line-height:14px;width:60px;text-align:center;font-size:11px;letter-spacing:-0.35px;color:#17531f;">22:40:00</div>
<div class="t" style="left:246.6px;top:981px;height:14px;line-height:14px;width:60px;text-align:center;font-size:11px;letter-spacing:-0.35px;color:#17531f;">22:40:30</div>
<div class="t" style="left:337.4px;top:981px;height:14px;line-height:14px;width:60px;text-align:center;font-size:11px;letter-spacing:-0.35px;color:#17531f;">22:41:00</div>
<div class="t" style="left:428.3px;top:981px;height:14px;line-height:14px;width:60px;text-align:center;font-size:11px;letter-spacing:-0.35px;color:#17531f;">22:41:30</div>
<div class="t" style="left:519.1px;top:981px;height:14px;line-height:14px;width:60px;text-align:center;font-size:11px;letter-spacing:-0.35px;color:#17531f;">22:42:00</div>
<div class="t" style="left:609.9px;top:981px;height:14px;line-height:14px;width:60px;text-align:center;font-size:11px;letter-spacing:-0.35px;color:#17531f;">22:42:30</div>
<div class="t" style="left:700.8px;top:981px;height:14px;line-height:14px;width:60px;text-align:center;font-size:11px;letter-spacing:-0.35px;color:#17531f;">22:43:00</div>
<div class="t" style="left:791.6px;top:981px;height:14px;line-height:14px;width:60px;text-align:center;font-size:11px;letter-spacing:-0.35px;color:#17531f;">22:43:30</div>
<div class="t" style="left:882.5px;top:981px;height:14px;line-height:14px;width:60px;text-align:center;font-size:11px;letter-spacing:-0.35px;color:#17531f;">22:44:00</div>
<div class="t" style="left:973.3px;top:981px;height:14px;line-height:14px;width:60px;text-align:center;font-size:11px;letter-spacing:-0.35px;color:#17531f;">22:44:30</div>
<div class="t" style="left:1064.1px;top:981px;height:14px;line-height:14px;width:60px;text-align:center;font-size:11px;letter-spacing:-0.35px;color:#17531f;">22:45:00</div>
<div class="t" style="left:1155.0px;top:981px;height:14px;line-height:14px;width:60px;text-align:center;font-size:11px;letter-spacing:-0.35px;color:#17531f;">22:45:30</div>
<div class="t" style="left:1245.8px;top:981px;height:14px;line-height:14px;width:60px;text-align:center;font-size:11px;letter-spacing:-0.35px;color:#17531f;">22:46:00</div>
<div class="t" style="left:1336.7px;top:981px;height:14px;line-height:14px;width:60px;text-align:center;font-size:11px;letter-spacing:-0.35px;color:#17531f;">22:46:30</div>
<div class="t" style="left:1427.5px;top:981px;height:14px;line-height:14px;width:60px;text-align:center;font-size:11px;letter-spacing:-0.35px;color:#17531f;">22:47:00</div>
<div class="t" style="left:1518.3px;top:981px;height:14px;line-height:14px;width:60px;text-align:center;font-size:11px;letter-spacing:-0.35px;color:#17531f;">22:47:30</div>
<div class="t" style="left:1609.2px;top:981px;height:14px;line-height:14px;width:60px;text-align:center;font-size:11px;letter-spacing:-0.35px;color:#17531f;">22:48:00</div>
<div class="t" style="left:1700.0px;top:981px;height:14px;line-height:14px;width:60px;text-align:center;font-size:11px;letter-spacing:-0.35px;color:#17531f;">22:48:30</div>
<div class="t" style="left:1790.9px;top:981px;height:14px;line-height:14px;width:60px;text-align:center;font-size:11px;letter-spacing:-0.35px;color:#17531f;">22:49:00</div>
<div style="left:1464px;top:858px;width:142px;height:36px;background:#fff;border:1px solid #c8c8c8;box-shadow:2px 2px 1.5px rgba(0,0,0,0.42);"></div>
<div class="t" style="left:1470px;top:860px;height:15px;line-height:15px;color:#555;letter-spacing:-0.2px;">Time: 6-3-2020 22:47:01.</div>
<div class="t" style="left:1470px;top:874px;height:15px;line-height:15px;color:#555;letter-spacing:-0.3px;">Latency: 15,33 ms.</div>
</body></html>
